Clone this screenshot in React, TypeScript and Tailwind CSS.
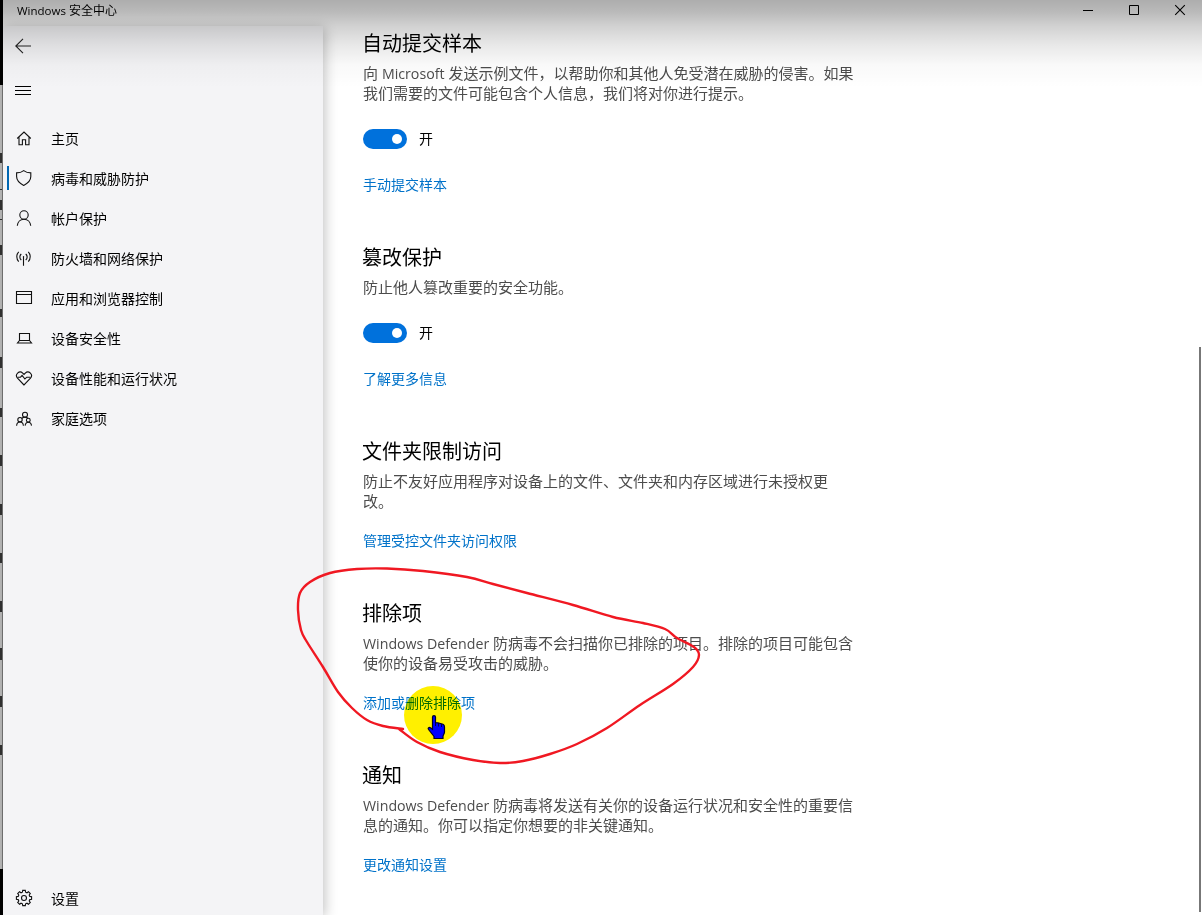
import React from 'react';

type IconProps = { children: React.ReactNode };

function Icon({ children }: IconProps) {
  return (
    <svg className="w-4 h-4 shrink-0 overflow-visible" viewBox="0 0 16 16" fill="none" stroke="#111" strokeWidth="1.1">
      {children}
    </svg>
  );
}

const navItems = [
  {
    label: '主页',
    icon: <path d="M1.2 8.500 8 2l6.800 6.500M3 7v7.700h3.400V9.800h3.200v4.900H13V7" />,
  },
  {
    label: '病毒和威胁防护',
    active: true,
    icon: <path d="M7.700.6C5.600 2.200 3.200 2.900.6 2.900v3.700c0 3.900 3 6.800 7.100 8.800 4.100-2 7.100-4.900 7.100-8.800V2.900C12.200 2.900 9.800 2.200 7.700.6z" />,
  },
  {
    label: '帐户保护',
    icon: (
      <>
        <circle cx="8" cy="5" r="4.200" />
        <path d="M1.300 15.800c.3-3.800 3-6.600 6.700-6.600s6.400 2.800 6.700 6.600" />
      </>
    ),
  },
  {
    label: '防火墙和网络保护',
    icon: (
      <>
        <path d="M7.500 7v8.800M5.300 4a3.800 3.800 0 0 0 0 6M9.700 4a3.800 3.800 0 0 1 0 6M2.700 1.800a7.300 7.300 0 0 0 0 9.800M12.300 1.800a7.300 7.300 0 0 1 0 9.800" />
        <circle cx="7.500" cy="6.800" r=".7" fill="#111" stroke="none" />
      </>
    ),
  },
  {
    label: '应用和浏览器控制',
    icon: <path d="M.5 1.500h15v12H.5zM.5 4.500h15" />,
  },
  {
    label: '设备安全性',
    icon: <path d="M3.500 10.500v-7h10v7M3.500 10.500h10l2 2.500h-14z" />,
  },
  {
    label: '设备性能和运行状况',
    icon: (
      <>
        <path d="M8 15 1.500 8.200C.2 6.700.3 4.400 1.600 3.100c1.500-1.400 3.700-1.400 5.100 0L8 4.400l1.300-1.300c1.400-1.400 3.600-1.400 5.100 0 1.300 1.300 1.400 3.600.1 5.100z" />
        <path d="M1.500 7.200h3l1.600-1.800 2.800 3.600 1.900-1.800h3.700" />
      </>
    ),
  },
  {
    label: '家庭选项',
    icon: (
      <>
        <circle cx="9" cy="4.700" r="2.500" />
        <circle cx="4" cy="9.700" r="2.200" />
        <circle cx="12.300" cy="10.200" r="1.900" />
        <path d="M.6 15.700c.2-2.300 1.500-3.700 3.400-3.700s3.200 1.400 3.400 3.700M9.100 15.600c.3-2.100 1.500-3.400 3.200-3.400s3 1.300 3.200 3.400M6 8.300c.8-.9 1.800-1.200 3-1.200s2.200.4 2.900 1.200" />
      </>
    ),
  },
];

// Rows of the window behind that peek out on the left: [gap above, height]
const behindMarks = [
  [68, 10], [26, 1], [10, 10], [9, 1], [25, 10], [54, 8], [40, 11], [40, 9],
  [38, 11], [38, 11], [38, 10], [38, 11], [36, 12], [36, 11], [38, 10],
];

const lasso = [
  [403, 729], [383, 726], [367, 720], [352, 708], [338, 692], [323, 667], [307, 642], [301, 630],
  [298, 610], [300, 593], [310, 582], [330, 573], [357, 569], [387, 568.500], [423, 571], [467, 577],
  [493, 584], [527, 593], [573, 605], [613, 617], [643, 623], [665, 629], [677, 638], [694, 647],
  [699, 655], [693, 667], [673, 684], [640, 705], [607, 728], [577, 744], [550, 754], [523, 761],
  [500, 763], [473, 760], [440, 752], [417, 742], [399, 729],
];

function smoothPath(pts: number[][]) {
  let d = `M${pts[0][0]} ${pts[0][1]}`;
  for (let i = 0; i < pts.length - 1; i++) {
    const a = pts[i - 1] || pts[i];
    const b = pts[i];
    const c = pts[i + 1];
    const e = pts[i + 2] || c;
    d += `C${b[0] + (c[0] - a[0]) / 6} ${b[1] + (c[1] - a[1]) / 6} ${c[0] - (e[0] - b[0]) / 6} ${c[1] - (e[1] - b[1]) / 6} ${c[0]} ${c[1]}`;
  }
  return d;
}

function gearPath() {
  const pts: string[] = [];
  for (let i = 0; i < 8; i++) {
    const a = (i * Math.PI) / 4;
    [[-0.27, 6], [-0.17, 7.7], [0.17, 7.7], [0.27, 6]].forEach(([off, r]) => {
      pts.push(`${(8 + r * Math.cos(a + off)).toFixed(2)} ${(8 + r * Math.sin(a + off)).toFixed(2)}`);
    });
  }
  return `M${pts.join('L')}Z`;
}

function Toggle() {
  return (
    <div className="mt-[26px] flex items-center h-5">
      <div className="w-11 h-5 rounded-full bg-[#0071dc] flex items-center justify-end pr-[5px]">
        <div className="w-2.5 h-2.5 rounded-full bg-white" />
      </div>
      <span className="ml-3 text-sm leading-5 text-black">开</span>
    </div>
  );
}

function Section({ title, lines, toggle, link }: {
  title: string;
  lines: React.ReactNode[];
  toggle?: boolean;
  link: string;
}) {
  return (
    <section className="flex flex-col items-start whitespace-nowrap">
      <h2 className="-ml-px pt-px text-xl leading-7 text-black">{title}</h2>
      <div className="mt-[5px] text-[15px] leading-5 text-[#4c4c4c]">
        {lines.map((line, i) => (
          <p key={i} className="h-5">{line}</p>
        ))}
      </div>
      {toggle && <Toggle />}
      <a className={`${toggle ? 'mt-[26px]' : 'mt-5'} text-sm leading-5 text-[#0072c9]`}>{link}</a>
    </section>
  );
}

function Latin({ children }: { children: React.ReactNode }) {
  return <span className="text-[14.2px]">{children}</span>;
}

export default function App() {
  return (
    <div className="relative w-[1202px] h-[915px] overflow-hidden flex bg-white font-['Open_Sans','Noto_Sans_CJK_SC',sans-serif]">
      {/* Edge of the window behind */}
      <div className="w-[3px] shrink-0 flex flex-col bg-[#bdbdbd] border-r border-[#777]">
        <div className="h-[85px] w-[3px] shrink-0 bg-black" />
        {behindMarks.map(([gap, h], i) => (
          <div key={i} className="w-[2px] shrink-0 bg-[#333]" style={{ marginTop: gap, height: h }} />
        ))}
        <div className="mt-auto h-[46px] w-[3px] shrink-0 bg-black" />
      </div>

      <div className="relative flex-1 flex flex-col">
        {/* Title bar */}
        <header className="h-[26px] shrink-0 flex justify-between">
          <div className="pl-3.5 h-[21px] text-xs leading-[21px] text-black whitespace-nowrap">
            <span className="text-[11.5px]">Windows </span>安全中心
          </div>
          <svg className="w-[120px] h-[21px]" viewBox="0 0 120 21" fill="none" stroke="#000" strokeWidth="1">
            <path d="M1 10.500h10M47.500 5.500h9v9h-9z" />
            <path d="M93.200 5.200l9.600 9.600M102.800 5.200l-9.600 9.600" strokeWidth="1.100" />
          </svg>
        </header>

        <div className="flex-1 flex min-h-0">
          {/* Navigation */}
          <aside className="w-80 shrink-0 flex flex-col bg-[#f4f4f6] shadow-[2px_2px_12px_rgba(0,0,0,0.24)]">
            <div className="h-10 pl-3 flex items-center">
              <svg className="w-4 h-4" viewBox="0 0 16 16" fill="none" stroke="#222" strokeWidth="1.1">
                <path d="M16 8H.8M8 .8.8 8 8 15.200" />
              </svg>
            </div>
            <div className="mt-[19px] h-[11px] pl-3">
              <svg className="w-4 h-[11px]" viewBox="0 0 16 11" stroke="#000">
                <path d="M0 1.500h16M0 5.500h16M0 9.500h16" />
              </svg>
            </div>
            <nav className="mt-[23px] flex flex-col">
              {navItems.map((item) => (
                <div key={item.label} className="h-10 flex items-center pl-1">
                  <div className={`w-0.5 h-6 mb-0.5 ${item.active ? 'bg-[#0067b3]' : ''}`} />
                  <div className="ml-[7px] -mt-0.5">
                    <Icon>{item.icon}</Icon>
                  </div>
                  <span className="ml-[19px] text-sm text-black">{item.label}</span>
                </div>
              ))}
            </nav>
            <div className="mt-auto h-10 mb-[-3px] flex items-center pl-[13px]">
              <Icon>
                <path d={gearPath()} />
                <circle cx="8" cy="8" r="2.500" />
              </Icon>
              <span className="ml-[19px] pt-px text-sm text-black">设置</span>
            </div>
          </aside>

          {/* Settings */}
          <main className="flex-1 pl-10 pt-[3px] flex flex-col gap-12">
            <Section
              title="自动提交样本"
              lines={[
                <>向 <Latin>Microsoft</Latin> 发送示例文件，以帮助你和其他人免受潜在威胁的侵害。如果</>,
                '我们需要的文件可能包含个人信息，我们将对你进行提示。',
              ]}
              toggle
              link="手动提交样本"
            />
            <Section title="篡改保护" lines={['防止他人篡改重要的安全功能。']} toggle link="了解更多信息" />
            <Section
              title="文件夹限制访问"
              lines={['防止不友好应用程序对设备上的文件、文件夹和内存区域进行未授权更', '改。']}
              link="管理受控文件夹访问权限"
            />
            <Section
              title="排除项"
              lines={[
                <><Latin>Windows Defender</Latin> 防病毒不会扫描你已排除的项目。排除的项目可能包含</>,
                '使你的设备易受攻击的威胁。',
              ]}
              link="添加或删除排除项"
            />
            <Section
              title="通知"
              lines={[
                <><Latin>Windows Defender</Latin> 防病毒将发送有关你的设备运行状况和安全性的重要信</>,
                '息的通知。你可以指定你想要的非关键通知。',
              ]}
              link="更改通知设置"
            />
          </main>
          <div className="mt-[321px] mr-px w-0.5 h-[565px] bg-[#777]" />
        </div>

        {/* Shade that falls from the top edge */}
        <div className="absolute inset-x-0 top-0 h-[90px] pointer-events-none bg-[linear-gradient(to_bottom,rgba(0,0,0,0.32)_0px,rgba(0,0,0,0.27)_12px,rgba(0,0,0,0.18)_26px,rgba(0,0,0,0.09)_45px,rgba(0,0,0,0.025)_65px,rgba(0,0,0,0)_88px)]" />
      </div>

      {/* Pointer highlight */}
      <div className="absolute left-[404px] top-[686px] w-[58px] h-[58px] rounded-full bg-[#fff000] mix-blend-multiply" />

      {/* Pen stroke and pointer */}
      <svg className="absolute inset-0 w-[1202px] h-[915px] pointer-events-none" viewBox="0 0 1202 915" fill="none">
        <path d={smoothPath(lasso)} stroke="#f01822" strokeWidth="2.400" strokeLinecap="round" strokeLinejoin="round" />
        <path
          d="M432.500 717c0-1.800 3-1.800 3 0v5.500l2.500.3 2.500.7 2.500.8c1.200.5 1.500 1.200 1.500 2.700v5c0 2-1.500 3-1.500 4.500v2h-9v-2c-1.500-2-3.500-4.500-5.500-7-1-1.500.5-2.500 2-1.800l2 1.500z"
          fill="#0000ff"
          stroke="#000020"
          strokeWidth="1.200"
        />
        <path d="M435.500 722v4M438.500 723v3.500M441.500 724v3" stroke="#000020" strokeWidth=".8" />
      </svg>
    </div>
  );
}
